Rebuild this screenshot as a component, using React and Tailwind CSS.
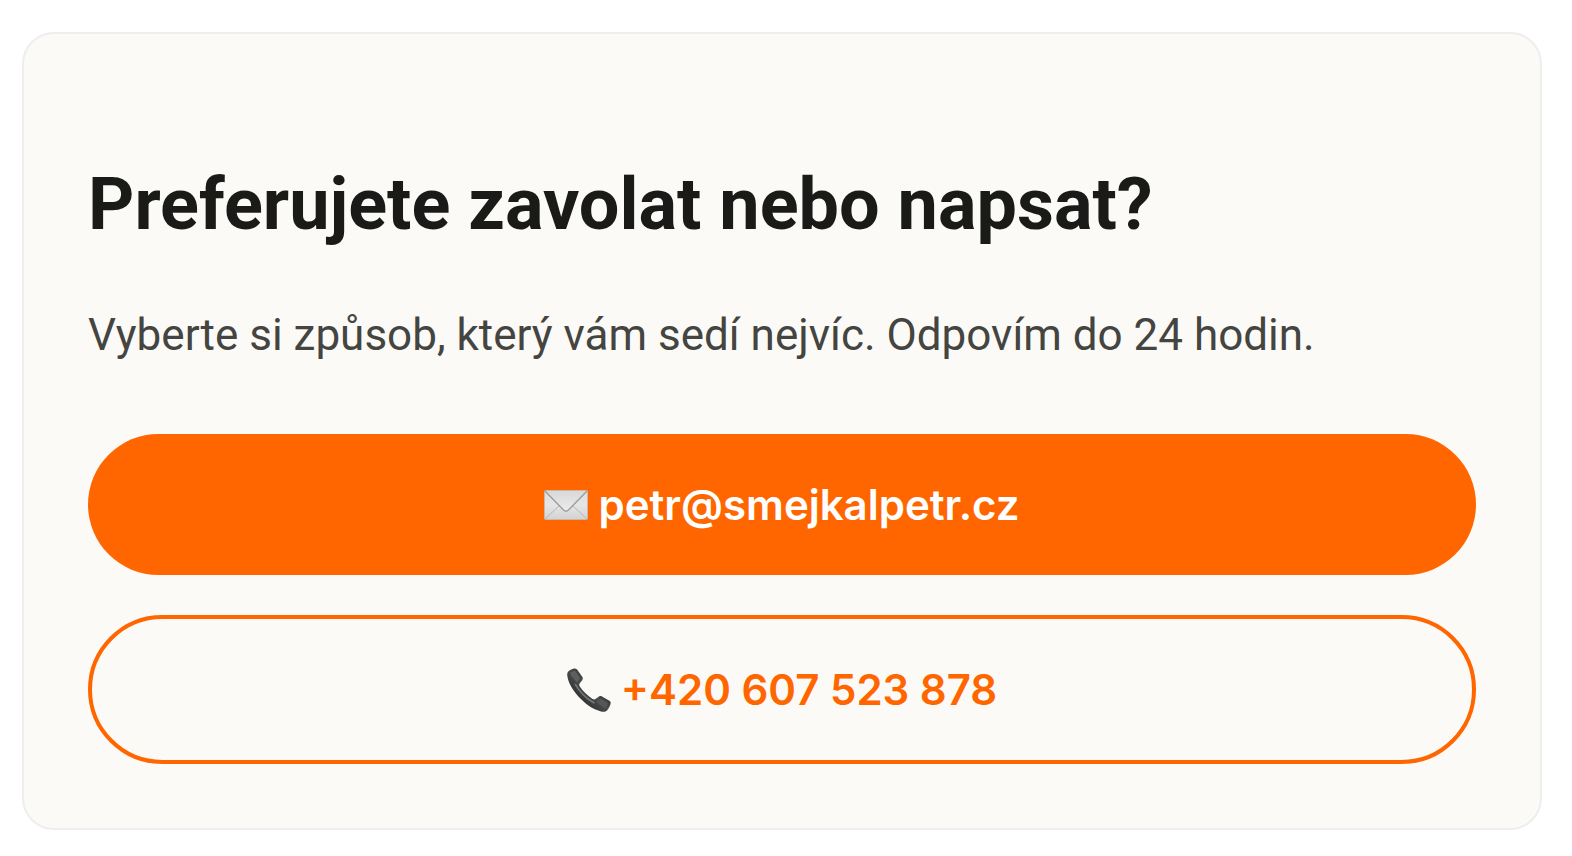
function EnvelopeIcon() {
    return (
        <svg viewBox="0 0 44 30" className="w-11 h-[30px] shrink-0" aria-hidden="true">
            <defs>
                <linearGradient id="paper" x1="0" y1="0" x2="0" y2="1">
                    <stop offset="0" stopColor="#dcdcdc" />
                    <stop offset="0.5" stopColor="#e6e6e6" />
                    <stop offset="1" stopColor="#d2d2d2" />
                </linearGradient>
                <linearGradient id="flap" x1="0" y1="0" x2="0" y2="1">
                    <stop offset="0" stopColor="#d9d9d9" />
                    <stop offset="1" stopColor="#ececec" />
                </linearGradient>
            </defs>
            <rect x="0.5" y="0.5" width="43" height="29" rx="1" fill="url(#paper)" stroke="#c4beb8" strokeWidth="0.8" />
            <path d="M1 29 L15.5 15.5 M43 29 L28.5 15.5" stroke="#b8b8b8" strokeWidth="1" fill="none" />
            <path d="M1 1 L19.5 20 Q22 22.5 24.5 20 L43 1 Z" fill="url(#flap)" />
            <path d="M1 1 L19.5 20 Q22 22.5 24.5 20 L43 1" stroke="#9c9c9c" strokeWidth="1.3" fill="none" />
        </svg>
    );
}

function PhoneIcon() {
    return (
        <svg viewBox="0 0 44 44" className="size-11 shrink-0" aria-hidden="true">
            <defs>
                <linearGradient id="handset" x1="0.3" y1="0.7" x2="0.7" y2="0.3">
                    <stop offset="0" stopColor="#343535" />
                    <stop offset="0.5" stopColor="#4a4b4b" />
                    <stop offset="1" stopColor="#303131" />
                </linearGradient>
            </defs>
            <path
                d="M1.5 3.2 C3 1.8 5.5 0.6 7.6 0.4 C9 0.3 9.8 1 10.6 2.2 L15.2 8.8 C16 10 16 11 15.2 12.2 L12.6 15.6 C12 16.6 12.2 17.6 12.8 18.6 C15.8 23.2 20.6 27.8 25.6 31 C26.8 31.7 27.8 31.6 28.8 30.8 L32 28.4 C33 27.8 34 27.8 35 28.4 L42 32.6 C43.4 33.4 43.9 34.2 43.6 35.6 C43.2 38 41.8 40.6 40.2 42.2 C38.6 43.8 36.4 44 34 43.4 C26.6 41.6 19.6 37 13.4 30.6 C6.8 24 1.6 16 0.4 8.6 C0 6.4 0.2 4.4 1.5 3.2 Z"
                fill="url(#handset)"
            />
            <path d="M3 5.2 C4.6 3.8 6.4 3 8.2 2.8 L13 10 L10 14.6 C7.6 11.8 4.8 8.6 3 5.2 Z" fill="#5e6060" />
            <path d="M29.6 33.6 L33.4 30.6 L41 35 C40.6 37 39.8 38.8 38.4 40.2 C35.2 39 31.8 36.6 29.6 33.6 Z" fill="#555757" />
            <path d="M8.4 16.4 C12.4 23.6 18.8 30.2 26.8 34.8" stroke="#777979" strokeWidth="1.6" strokeLinecap="round" fill="none" />
        </svg>
    );
}

function ContactCard() {
    return (
        <section className="rounded-[32px] border-2 border-[#eeeeee] bg-[#fbfaf6] px-16 pt-32 pb-16">
            <h2 className="text-[72px] leading-[86px] font-bold text-[#1a1a18]">Preferujete zavolat nebo napsat?</h2>
            <p className="mt-[52px] text-[44px] leading-[70px] text-[#444441]">
                Vyberte si způsob, který vám sedí nejvíc. Odpovím do 24 hodin.
            </p>
            <div className="mt-16 flex flex-col gap-10 font-['Inter',sans-serif] text-[42px] leading-[69px] font-semibold">
                <a
                    href="mailto:petr@smejkalpetr.cz"
                    className="flex items-center justify-center gap-2.5 rounded-full bg-[#ff6600] py-9 text-white"
                >
                    <EnvelopeIcon />
                    petr@smejkalpetr.cz
                </a>
                <a
                    href="tel:+420607523878"
                    className="flex items-center justify-center gap-2.5 rounded-full border-4 border-[#ff6600] py-9 text-[#ff6600]"
                >
                    <PhoneIcon />
                    +420 607 523 878
                </a>
            </div>
        </section>
    );
}

function App() {
    return (
        <main className="min-h-screen bg-white pt-8 pr-[30px] pb-6 pl-[22px] font-['Roboto',sans-serif]">
            <ContactCard />
        </main>
    );
}

export default App;
